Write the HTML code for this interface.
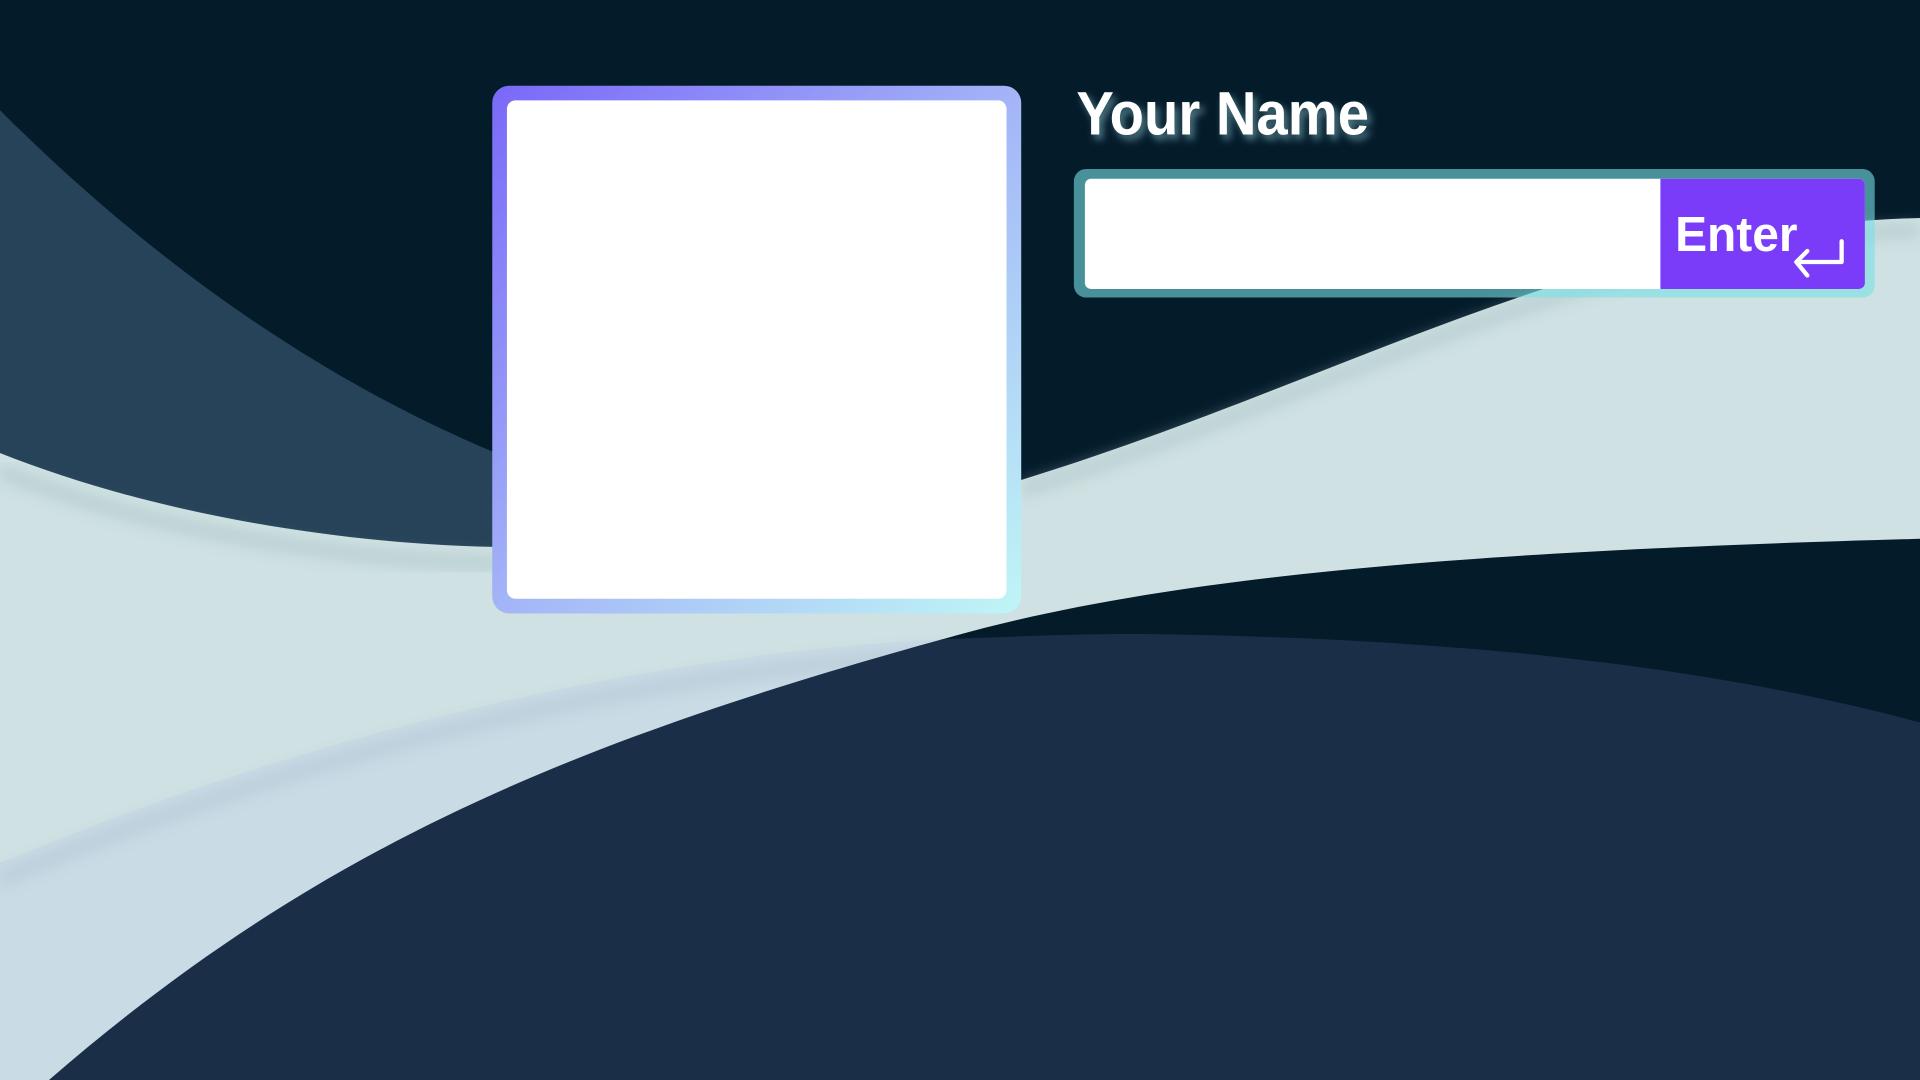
<!DOCTYPE html>
<html><head><meta charset="utf-8"><style>
html,body{margin:0;padding:0;width:1920px;height:1080px;overflow:hidden;background:#041b2a}
svg{display:block}
</style></head><body>
<svg width="1920" height="1080" viewBox="0 0 1568 882" preserveAspectRatio="none" xmlns="http://www.w3.org/2000/svg">
<defs>
<linearGradient id="bx" x1="0" y1="0" x2="1" y2="1">
<stop offset="0" stop-color="#7a68f8"/><stop offset="0.5" stop-color="#a3b4f7"/><stop offset="1" stop-color="#bff6f6"/>
</linearGradient>
<filter id="sh" x="-20%" y="-20%" width="140%" height="160%"><feDropShadow dx="3" dy="4" stdDeviation="3" flood-color="#5f8e9a" flood-opacity="0.85"/></filter>
<filter id="bl" x="-10%" y="-10%" width="120%" height="120%"><feGaussianBlur stdDeviation="6"/></filter>
</defs>
<rect width="1568" height="882" fill="#041b2a"/>
<path d="M0,90 C150,240 300,330 430,380 L430,455 C250,448 100,412 0,370 Z" fill="#26435a"/>
<path d="M0,370 C120,418 280,447 430,447 L834,392 C1100,310 1300,185 1568,178 L1568,440 C1200,450 950,470 770,522 C500,560 200,630 0,705 Z" fill="#cfe1e2"/>
<path d="M834,400 C1100,318 1300,195 1568,188" stroke="#9fbac0" stroke-width="10" fill="none" opacity="0.5" filter="url(#bl)"/>
<path d="M0,385 C120,432 280,460 430,460" stroke="#9fbac0" stroke-width="10" fill="none" opacity="0.5" filter="url(#bl)"/>
<path d="M0,705 C250,600 520,535 770,522 L770,882 L0,882 Z" fill="#c9dbe4"/>
<path d="M0,718 C250,613 520,548 770,535" stroke="#a9bdd0" stroke-width="12" fill="none" opacity="0.45" filter="url(#bl)"/>
<path d="M40,882 C250,700 450,610 770,522 C850,519 900,517 950,518 C1200,522 1400,545 1568,590 L1568,882 Z" fill="#1a2e47"/>
<rect x="402" y="70" width="432" height="431" rx="14" fill="url(#bx)"/>
<rect x="414" y="82" width="408" height="407" rx="7" fill="#fff"/>
<text x="879" y="110" font-family="Liberation Sans, sans-serif" font-weight="bold" font-size="50" fill="#fff" textLength="239" lengthAdjust="spacingAndGlyphs" filter="url(#sh)">Your Name</text>
<rect x="877" y="138" width="654" height="105" rx="10" fill="rgba(120,225,230,0.6)"/>
<rect x="886" y="146" width="637" height="90" rx="5" fill="#fff"/>
<path d="M1356,146 H1518 a5,5 0 0 1 5,5 V231 a5,5 0 0 1 -5,5 H1356 Z" fill="#7a3cf8"/>
<text x="1368" y="205" font-family="Liberation Sans, sans-serif" font-weight="bold" font-size="40" fill="#fff" textLength="100" lengthAdjust="spacingAndGlyphs">Enter</text>
<path d="M1504,197 V214 H1467 M1476,205 L1467,214 L1476,225" stroke="#fff" stroke-width="3.5" fill="none" stroke-linecap="round" stroke-linejoin="round"/>
</svg>
</body></html>
